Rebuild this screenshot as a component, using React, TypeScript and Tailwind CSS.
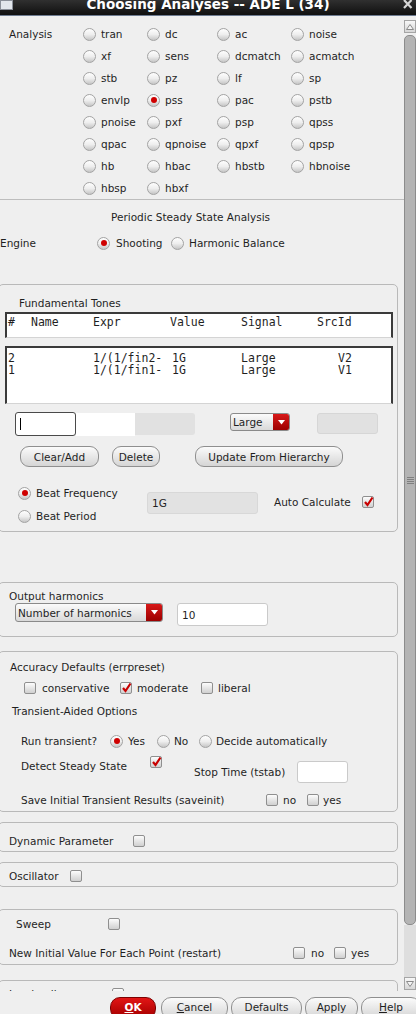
import React from "react";

const font = "font-['DejaVu_Sans','Liberation_Sans',sans-serif]";
const mono = "font-['DejaVu_Sans_Mono','Liberation_Mono',monospace]";

const analyses = [
  ["tran", "dc", "ac", "noise"],
  ["xf", "sens", "dcmatch", "acmatch"],
  ["stb", "pz", "lf", "sp"],
  ["envlp", "pss", "pac", "pstb"],
  ["pnoise", "pxf", "psp", "qpss"],
  ["qpac", "qpnoise", "qpxf", "qpsp"],
  ["hb", "hbac", "hbstb", "hbnoise"],
  ["hbsp", "hbxf"],
];

const Radio = ({ on = false }: { on?: boolean }) => (
  <span className="flex h-[13px] w-[13px] shrink-0 items-center justify-center rounded-full border border-[#a3a3a3] bg-linear-to-b from-[#fefefe] via-[#eeeeee] to-[#c6c6c6]">
    {on && <span className="h-[6px] w-[6px] rounded-full bg-[#cf0000]" />}
  </span>
);

const Check = ({ on = false }: { on?: boolean }) => (
  <span className="relative flex h-[12px] w-[12px] shrink-0 items-center justify-center rounded-[2px] border border-[#8f8f8f] bg-linear-to-b from-[#fcfcfc] to-[#d0d0d0]">
    {on && (
      <svg width="11" height="11" viewBox="0 0 11 11" className="absolute left-[0px] top-[-1px]">
        <path d="M2 6 L4.5 9 L9.5 1.5" stroke="#c80000" strokeWidth="2.2" fill="none" />
      </svg>
    )}
  </span>
);

const Combo = ({ text, cls }: { text: string; cls: string }) => (
  <div className={"flex overflow-hidden rounded-[3px] border border-[#8a8a8a] bg-linear-to-b from-[#fbfbfb] to-[#d9d9d9] " + cls}>
    <span className="flex flex-1 items-center pl-[2px]">{text}</span>
    <span className="flex w-[16px] items-center justify-center bg-linear-to-b from-[#d81818] to-[#9c0000]">
      <svg width="7" height="5" viewBox="0 0 7 5">
        <path d="M0 0 H7 L3.5 4.5 Z" fill="#ffffff" />
      </svg>
    </span>
  </div>
);

const Btn = ({ children, cls }: { children: React.ReactNode; cls: string }) => (
  <div className={"flex items-center justify-center rounded-[9px] border border-[#8f8f8f] bg-linear-to-b from-[#fbfbfb] to-[#d5d5d5] " + cls}>
    {children}
  </div>
);

const Box = ({ children, cls }: { children: React.ReactNode; cls: string }) => (
  <div className={"ml-[-2px] w-[400px] rounded-[5px] border border-[#b9b9b9] " + cls}>
    <div className="ml-[1px] flex flex-col">{children}</div>
  </div>
);

const TitleBar = () => (
  <div className="relative h-[16px] shrink-0 overflow-hidden border-b border-[#6d7b90] bg-linear-to-b from-[#303030] to-[#101010]">
    <div className="absolute left-0 top-0 h-[10px] w-[13px] border border-[#8a8f99] bg-[#e2e6ec]" />
    <div className="mt-[-4px] text-center text-[13.5px] font-bold leading-[16px] text-white">
      Choosing Analyses -- ADE L (34)
    </div>
    <svg width="10" height="10" viewBox="0 0 10 10" className="absolute right-[3px] top-0">
      <path d="M1 0 L8.5 8 M8.5 0 L1 8" stroke="#d6d6d6" strokeWidth="2.2" />
    </svg>
  </div>
);

const ScrollBar = () => (
  <div className="flex w-[12px] shrink-0 flex-col">
    <div className="mt-[4px] flex h-[13px] items-center justify-center border border-[#a5a5a5] bg-linear-to-b from-[#f7f7f7] to-[#d6d6d6]">
      <svg width="8" height="6" viewBox="0 0 8 6">
        <path d="M0.5 5.5 L4 0.5 L7.5 5.5 Z" fill="#f4f4f4" stroke="#8a8a8a" />
      </svg>
    </div>
    <div className="mt-[2px] flex h-[890px] items-center justify-center rounded-[5px] border border-[#8c8c8c] bg-[#b4b4b4]">
      <div className="flex flex-col gap-[1px]">
        <span className="h-px w-[7px] bg-[#7f7f7f]" />
        <span className="h-px w-[7px] bg-[#7f7f7f]" />
        <span className="h-px w-[7px] bg-[#7f7f7f]" />
        <span className="h-px w-[7px] bg-[#7f7f7f]" />
      </div>
    </div>
    <div className="flex-1 bg-[#dedede]" />
    <div className="flex h-[13px] items-center justify-center border border-[#a5a5a5] bg-linear-to-b from-[#f7f7f7] to-[#d6d6d6]">
      <svg width="8" height="6" viewBox="0 0 8 6">
        <path d="M0.5 0.5 L4 5.5 L7.5 0.5 Z" fill="#f4f4f4" stroke="#8a8a8a" />
      </svg>
    </div>
    <div className="h-[1px]" />
  </div>
);

const Content = () => (
  <div className="flex flex-col leading-[14px]">
    <div className="flex pt-[7px]">
      <div className="flex h-[22px] w-[83px] items-center pl-[9px]">Analysis</div>
      <div className="grid grid-cols-[64px_70px_74px_80px]">
        {analyses.flat().map((a) => (
          <div key={a} className="flex h-[22px] items-center gap-[5px]">
            <Radio on={a === "pss"} />
            <span>{a}</span>
          </div>
        ))}
      </div>
    </div>
    <div className="border-t border-[#bdbdbd]" />
    <div className="mt-[10px] h-[14px] pl-[111px]">Periodic Steady State Analysis</div>
    <div className="mt-[8px] flex h-[22px] items-center">
      <span className="w-[97px]">Engine</span>
      <div className="flex w-[74px] items-center gap-[6px]">
        <Radio on />
        <span>Shooting</span>
      </div>
      <div className="flex items-center gap-[5px]">
        <Radio />
        <span>Harmonic Balance</span>
      </div>
    </div>

    <Box cls="mt-[30px]">
      <div className="mt-[11px] h-[14px] pl-[19px]">Fundamental Tones</div>
      <div className={"ml-[5px] mt-[2px] h-[26px] w-[388px] border-2 border-b border-[#3a3a3a] border-b-[#d4d4d4] bg-white pl-[1px] pt-[2px] text-[11.5px] leading-[12px] " + mono}>
        <div className="flex">
          <span className="w-[23px]">#</span>
          <span className="w-[62px]">Name</span>
          <span className="w-[77px]">Expr</span>
          <span className="w-[71px]">Value</span>
          <span className="w-[76px]">Signal</span>
          <span>SrcId</span>
        </div>
      </div>
      <div className={"ml-[5px] mt-[8px] h-[58px] w-[388px] border-2 border-b border-[#3a3a3a] border-b-[#d4d4d4] bg-white pl-[1px] pt-[4px] text-[11.5px] leading-[12px] " + mono}>
        {[
          ["2", "1/(1/fin2-", "V2"],
          ["1", "1/(1/fin1-", "V1"],
        ].map((r) => (
          <div key={r[0]} className="flex">
            <span className="w-[85px]">{r[0]}</span>
            <span className="w-[79px]">{r[1]}</span>
            <span className="w-[69px]">1G</span>
            <span className="w-[97px]">Large</span>
            <span>{r[2]}</span>
          </div>
        ))}
      </div>
      <div className="mt-[8px] flex h-[24px] items-start">
        <div className="ml-[15px] flex h-[24px] w-[61px] items-center rounded-[3px] border border-[#4a4a4a] bg-white pl-[4px]">
          <span className="h-[12px] w-px bg-black" />
        </div>
        <div className="mt-[1px] h-[23px] w-[59px] bg-white" />
        <div className="mt-[1px] h-[22px] w-[60px] rounded-r-[3px] bg-[#e1e1e1]" />
        <Combo text="Large" cls="ml-[35px] mt-[1px] h-[18px] w-[60px]" />
        <div className="ml-[27px] mt-[1px] h-[21px] w-[61px] rounded-[3px] border border-[#d6d6d6] bg-[#e1e1e1]" />
      </div>
      <div className="mt-[10px] flex h-[21px]">
        <Btn cls="ml-[20px] w-[79px]">Clear/Add</Btn>
        <Btn cls="ml-[13px] w-[48px]">Delete</Btn>
        <Btn cls="ml-[35px] w-[148px]">Update From Hierarchy</Btn>
      </div>
      <div className="mt-[19px] flex h-[37px] items-start">
        <div className="ml-[18px] flex w-[129px] flex-col">
          <div className="flex h-[14px] items-center gap-[5px]">
            <Radio on />
            <span>Beat Frequency</span>
          </div>
          <div className="mt-[9px] flex h-[14px] items-center gap-[5px]">
            <Radio />
            <span>Beat Period</span>
          </div>
        </div>
        <div className="mt-[6px] flex h-[22px] w-[111px] items-center rounded-[3px] border border-[#d8d8d8] bg-[#e2e2e2] pl-[4px]">1G</div>
        <div className="ml-[16px] mt-[9px] flex h-[14px] items-center">
          <span className="w-[88px]">Auto Calculate</span>
          <Check on />
        </div>
      </div>
      <div className="h-[8px]" />
    </Box>

    <Box cls="mt-[50px]">
      <div className="mt-[6px] h-[14px] pl-[9px]">Output harmonics</div>
      <div className="flex h-[23px] items-start">
        <Combo text="Number of harmonics" cls="ml-[15px] h-[19px] w-[148px]" />
        <div className="ml-[14px] flex h-[23px] w-[91px] items-center rounded-[3px] border border-[#cacaca] bg-white pl-[4px]">10</div>
      </div>
      <div className="h-[10px]" />
    </Box>

    <Box cls="mt-[14px]">
      <div className="mt-[8px] h-[14px] pl-[10px]">Accuracy Defaults (errpreset)</div>
      <div className="mt-[7px] flex h-[14px] items-center pl-[24px]">
        <div className="flex w-[96px] items-center gap-[6px]">
          <Check />
          <span>conservative</span>
        </div>
        <div className="flex w-[81px] items-center gap-[5px]">
          <Check on />
          <span>moderate</span>
        </div>
        <div className="flex items-center gap-[5px]">
          <Check />
          <span>liberal</span>
        </div>
      </div>
      <div className="mt-[9px] h-[14px] pl-[12px]">Transient-Aided Options</div>
      <div className="mt-[16px] flex h-[14px] items-center pl-[21px]">
        <span className="w-[89px]">Run transient?</span>
        <div className="flex w-[47px] items-center gap-[5px]">
          <Radio on />
          <span>Yes</span>
        </div>
        <div className="flex w-[42px] items-center gap-[4px]">
          <Radio />
          <span>No</span>
        </div>
        <div className="flex items-center gap-[4px]">
          <Radio />
          <span>Decide automatically</span>
        </div>
      </div>
      <div className="mt-[7px] flex h-[28px] items-start pl-[21px]">
        <span className="mt-[4px] w-[129px]">Detect Steady State</span>
        <span className="mt-[1px]">
          <Check on />
        </span>
        <span className="ml-[32px] mt-[10px] w-[103px]">Stop Time (tstab)</span>
        <div className="mt-[6px] h-[22px] w-[51px] rounded-[3px] border border-[#cacaca] bg-white" />
      </div>
      <div className="mt-[10px] flex h-[14px] items-center pl-[21px]">
        <span className="w-[245px]">Save Initial Transient Results (saveinit)</span>
        <div className="flex w-[41px] items-center gap-[5px]">
          <Check />
          <span>no</span>
        </div>
        <div className="flex items-center gap-[4px]">
          <Check />
          <span>yes</span>
        </div>
      </div>
      <div className="h-[4px]" />
    </Box>

    <Box cls="mt-[10px]">
      <div className="mt-[11px] flex h-[14px] items-center pl-[9px]">
        <span className="w-[124px]">Dynamic Parameter</span>
        <Check />
      </div>
      <div className="h-[3px]" />
    </Box>

    <Box cls="mt-[10px]">
      <div className="mt-[6px] flex h-[14px] items-center pl-[9px]">
        <span className="w-[61px]">Oscillator</span>
        <Check />
      </div>
      <div className="h-[3px]" />
    </Box>

    <Box cls="mt-[22px]">
      <div className="mt-[7px] flex h-[14px] items-center pl-[16px]">
        <span className="w-[92px]">Sweep</span>
        <Check />
      </div>
      <div className="mt-[15px] flex h-[14px] items-center pl-[9px]">
        <span className="w-[284px]">New Initial Value For Each Point (restart)</span>
        <div className="flex w-[41px] items-center gap-[6px]">
          <Check />
          <span>no</span>
        </div>
        <div className="flex items-center gap-[5px]">
          <Check />
          <span>yes</span>
        </div>
      </div>
      <div className="h-[4px]" />
    </Box>

    <Box cls="mt-[15px]">
      <div className="mt-[6px] flex h-[14px] items-center pl-[9px]">
        <span className="w-[103px]">Load pull</span>
        <Check />
      </div>
      <div className="h-[20px]" />
    </Box>
  </div>
);

const Footer = () => (
  <div className="flex h-[23px] shrink-0 items-start pl-[110px] pt-[6px]">
    <div className="flex h-[22px] w-[46px] shrink-0 items-center justify-center rounded-[10px] border border-[#7c0000] bg-linear-to-b from-[#e21515] to-[#a30000] font-bold text-white">
      <span>
        <u>O</u>K
      </span>
    </div>
    <Btn cls="ml-[5px] h-[22px] w-[67px] shrink-0 rounded-[10px]">
      <span>
        <u>C</u>ancel
      </span>
    </Btn>
    <Btn cls="ml-[3px] h-[22px] w-[71px] shrink-0 rounded-[10px]">Defaults</Btn>
    <Btn cls="ml-[3px] h-[22px] w-[53px] shrink-0 rounded-[10px]">Apply</Btn>
    <Btn cls="ml-[3px] h-[22px] w-[60px] shrink-0 rounded-[10px]">
      <span>
        <u>H</u>elp
      </span>
    </Btn>
  </div>
);

export default function App() {
  return (
    <div className={"flex h-[1014px] w-[416px] flex-col overflow-hidden bg-[#efefef] text-[10.5px] text-[#1f1f1f] " + font}>
      <TitleBar />
      <div className="flex h-[975px] shrink-0 overflow-hidden">
        <div className="w-[404px] shrink-0 overflow-hidden">
          <Content />
        </div>
        <ScrollBar />
      </div>
      <Footer />
    </div>
  );
}
